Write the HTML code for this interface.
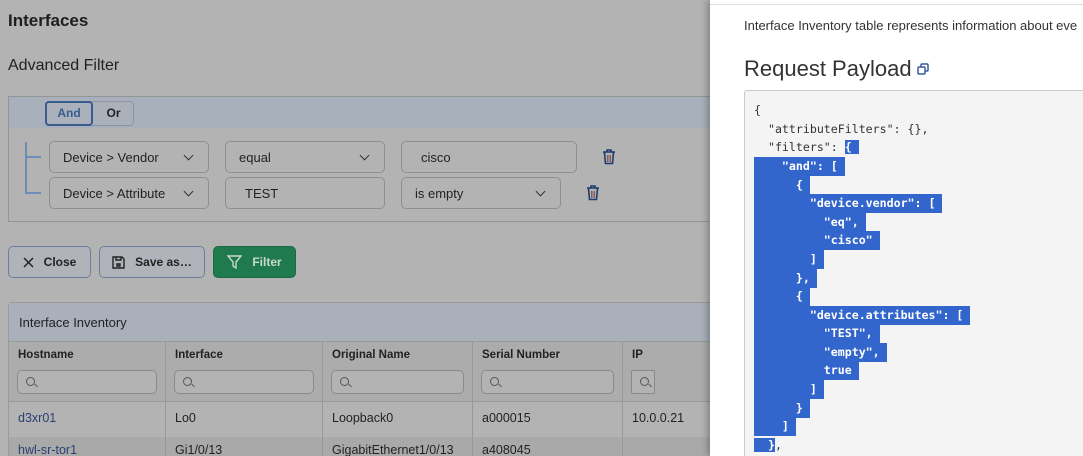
<!DOCTYPE html>
<html style="width:1083px;height:456px;overflow:hidden"><head><meta charset="utf-8"><style>
*{box-sizing:border-box;margin:0;padding:0}
body{width:1083px;height:456px;overflow:hidden;background:#b3b3b3;font-family:"Liberation Sans",sans-serif;color:#1e1e1e;position:relative}
.a{position:absolute}
.box{position:absolute;border:1px solid #8f8f8f;border-radius:5px;font-size:13px;color:#222;display:flex;align-items:center;padding-left:13px;white-space:nowrap}
.chev{position:absolute;right:16px;top:10px;width:7px;height:7px;border-right:1.5px solid #333;border-bottom:1.5px solid #333;transform:rotate(45deg)}
.btn{position:absolute;top:246px;height:32px;border:1px solid #6a7f9c;border-radius:5px;font-size:12px;font-weight:bold;color:#222;display:flex;align-items:center;justify-content:center;gap:10px;background:#b0b4ba}
.th{position:absolute;top:349px;font-size:11.5px;font-weight:bold;color:#222}
.si{position:absolute;top:370px;height:24px;border:1px solid #8a8a8a;border-radius:5px;background:#b3b3b3}
.si::before{content:"";position:absolute;left:8px;top:6px;width:7px;height:7px;border:1.3px solid #555;border-radius:50%}
.si::after{content:"";position:absolute;left:16px;top:14px;width:4px;height:1.3px;background:#555;transform:rotate(45deg)}
.td{position:absolute;font-size:12.5px;color:#222}
.code{position:absolute;left:744px;top:90px;width:360px;height:380px;background:#f4f4f4;border:1px solid #ccc;border-radius:3px}
.l{position:absolute;left:754px;height:19px;font-family:"DejaVu Sans Mono","Liberation Mono",monospace;font-size:11.6px;line-height:19px;white-space:pre;color:#333}
.h{background:#3366cc;color:#fff;font-weight:bold}
</style></head><body>
<div class="a" style="left:8px;top:11px;font-size:17px;font-weight:bold">Interfaces</div>
<div class="a" style="left:8px;top:57px;font-size:16px;color:#222">Advanced Filter</div>
<div class="a" style="left:8px;top:96px;width:705px;height:126px;border:1px solid #959595"></div>
<div class="a" style="left:9px;top:97px;width:703px;height:31px;background:#a8b0bb"></div>
<div class="a" style="left:45px;top:101px;width:89px;height:25px;border:1px solid #8d949e;border-radius:4px;background:#aab1bb"></div>
<div class="a" style="left:45px;top:101px;width:48px;height:25px;border:2px solid #3a5c8f;border-radius:4px;font-size:12px;font-weight:bold;color:#3a5c8f;text-align:center;line-height:21px">And</div>
<div class="a" style="left:93px;top:101px;width:41px;height:25px;font-size:12px;font-weight:bold;text-align:center;line-height:25px;color:#222">Or</div>
<div class="a" style="left:25px;top:142px;width:2px;height:52px;background:#6d8cb8"></div>
<div class="a" style="left:25px;top:156px;width:16px;height:2px;background:#6d8cb8"></div>
<div class="a" style="left:25px;top:192px;width:16px;height:2px;background:#6d8cb8"></div>
<div class="box" style="left:49px;top:141px;width:160px;height:32px">Device &gt; Vendor<span class="chev"></span></div>
<div class="box" style="left:49px;top:177px;width:160px;height:32px">Device &gt; Attribute<span class="chev"></span></div>
<div class="box" style="left:225px;top:141px;width:160px;height:32px">equal<span class="chev"></span></div>
<div class="box" style="left:225px;top:177px;width:160px;height:32px;padding-left:19px">TEST</div>
<div class="box" style="left:401px;top:141px;width:176px;height:32px;padding-left:19px">cisco</div>
<div class="box" style="left:401px;top:177px;width:160px;height:32px">is empty<span class="chev"></span></div>
<svg class="a" style="left:602px;top:149px" width="14" height="16" viewBox="0 0 14 16"><path d="M1 3h12M5 3V1h4v2M2.5 3.5l1 11h7l1-11" fill="none" stroke="#1f3a6e" stroke-width="1.6"/><path d="M5.5 6v7M7 6v7M8.5 6v7" stroke="#8a5a5a" stroke-width="1"/></svg>
<svg class="a" style="left:586px;top:185px" width="14" height="16" viewBox="0 0 14 16"><path d="M1 3h12M5 3V1h4v2M2.5 3.5l1 11h7l1-11" fill="none" stroke="#1f3a6e" stroke-width="1.6"/><path d="M5.5 6v7M7 6v7M8.5 6v7" stroke="#8a5a5a" stroke-width="1"/></svg>
<div class="btn" style="left:8px;width:83px"><svg width="11" height="11"><path d="M1 1l9 9M10 1l-9 9" stroke="#222" stroke-width="1.5"/></svg>Close</div>
<div class="btn" style="left:99px;width:106px"><svg width="13" height="13"><path d="M1 1h9l2 2v9H1z M4 1v3h5V1 M5 8h3v2H5z" fill="none" stroke="#222" stroke-width="1.4"/></svg>Save as…</div>
<div class="btn" style="left:213px;width:83px;background:#1f7a4d;border-color:#1a6a43;color:#c8d9cf"><svg width="15" height="14"><path d="M1 1h13l-5 6v6l-3-2V7z" fill="none" stroke="#c8d9cf" stroke-width="1.4"/></svg>Filter</div>
<div class="a" style="left:8px;top:302px;width:710px;height:160px;border:1px solid #9a9a9a;border-radius:4px;background:#b3b3b3"></div>
<div class="a" style="left:9px;top:303px;width:705px;height:39px;background:#a9b0ba;border-bottom:1px solid #999"></div>
<div class="a" style="left:19px;top:315px;font-size:13px;color:#222">Interface Inventory</div>
<div class="a" style="left:9px;top:342px;width:705px;height:60px;background:#acacac;border-bottom:1px solid #999"></div>
<div class="a" style="left:9px;top:437px;width:705px;height:20px;background:#a9a9a9"></div>
<div class="a" style="left:165px;top:342px;width:1px;height:120px;background:#999"></div>
<div class="a" style="left:322px;top:342px;width:1px;height:120px;background:#999"></div>
<div class="a" style="left:472px;top:342px;width:1px;height:120px;background:#999"></div>
<div class="a" style="left:622px;top:342px;width:1px;height:120px;background:#999"></div>
<div class="th" style="left:18px">Hostname</div><div class="th" style="left:175px">Interface</div><div class="th" style="left:332px">Original Name</div><div class="th" style="left:482px">Serial Number</div><div class="th" style="left:632px">IP</div>
<div class="si" style="left:17px;width:140px"></div><div class="si" style="left:174px;width:140px"></div><div class="si" style="left:331px;width:133px"></div><div class="si" style="left:481px;width:133px"></div><div class="si" style="left:631px;width:24px;border-radius:2px"></div>
<div class="td" style="left:18px;top:411px;color:#2b3f73">d3xr01</div><div class="td" style="left:175px;top:411px">Lo0</div><div class="td" style="left:332px;top:411px">Loopback0</div><div class="td" style="left:482px;top:411px">a000015</div><div class="td" style="left:632px;top:411px">10.0.0.21</div>
<div class="td" style="left:18px;top:443px;color:#2b3f73">hwl-sr-tor1</div><div class="td" style="left:175px;top:443px">Gi1/0/13</div><div class="td" style="left:332px;top:443px">GigabitEthernet1/0/13</div><div class="td" style="left:482px;top:443px">a408045</div>
<div class="a" style="left:710px;top:0;width:373px;height:456px;background:#fff;box-shadow:-3px 0 6px rgba(0,0,0,.25)"></div>
<div class="a" style="left:710px;top:4px;width:373px;height:1px;background:#ddd"></div>
<div class="a" style="left:744px;top:18px;font-size:13px;color:#333;white-space:nowrap">Interface Inventory table represents information about eve</div>
<div class="a" style="left:744px;top:56px;font-size:22px;color:#333">Request Payload</div>
<svg class="a" style="left:917px;top:63px" width="13" height="13"><rect x="4" y="1" width="7" height="7" rx="1" fill="none" stroke="#3a5ca0" stroke-width="1.5"/><rect x="1" y="4" width="7" height="7" rx="1" fill="#fff" stroke="#3a5ca0" stroke-width="1.5"/></svg>
<div class="code"></div>
<div class="l" style="top:101px">{</div>
<div class="l" style="top:120px">  "attributeFilters": {},</div>
<div class="l" style="top:138px">  "filters": <span class="h">{ </span></div>
<div class="l h" style="top:157px">    "and": [ </div>
<div class="l h" style="top:176px">      { </div>
<div class="l h" style="top:194px">        "device.vendor": [ </div>
<div class="l h" style="top:213px">          "eq", </div>
<div class="l h" style="top:231px">          "cisco" </div>
<div class="l h" style="top:250px">        ] </div>
<div class="l h" style="top:269px">      }, </div>
<div class="l h" style="top:287px">      { </div>
<div class="l h" style="top:306px">        "device.attributes": [ </div>
<div class="l h" style="top:324px">          "TEST", </div>
<div class="l h" style="top:343px">          "empty", </div>
<div class="l h" style="top:361px">          true </div>
<div class="l h" style="top:380px">        ] </div>
<div class="l h" style="top:399px">      } </div>
<div class="l h" style="top:417px">    ] </div>
<div class="l" style="top:436px"><span class="h">  }</span>,</div>
</body></html>
